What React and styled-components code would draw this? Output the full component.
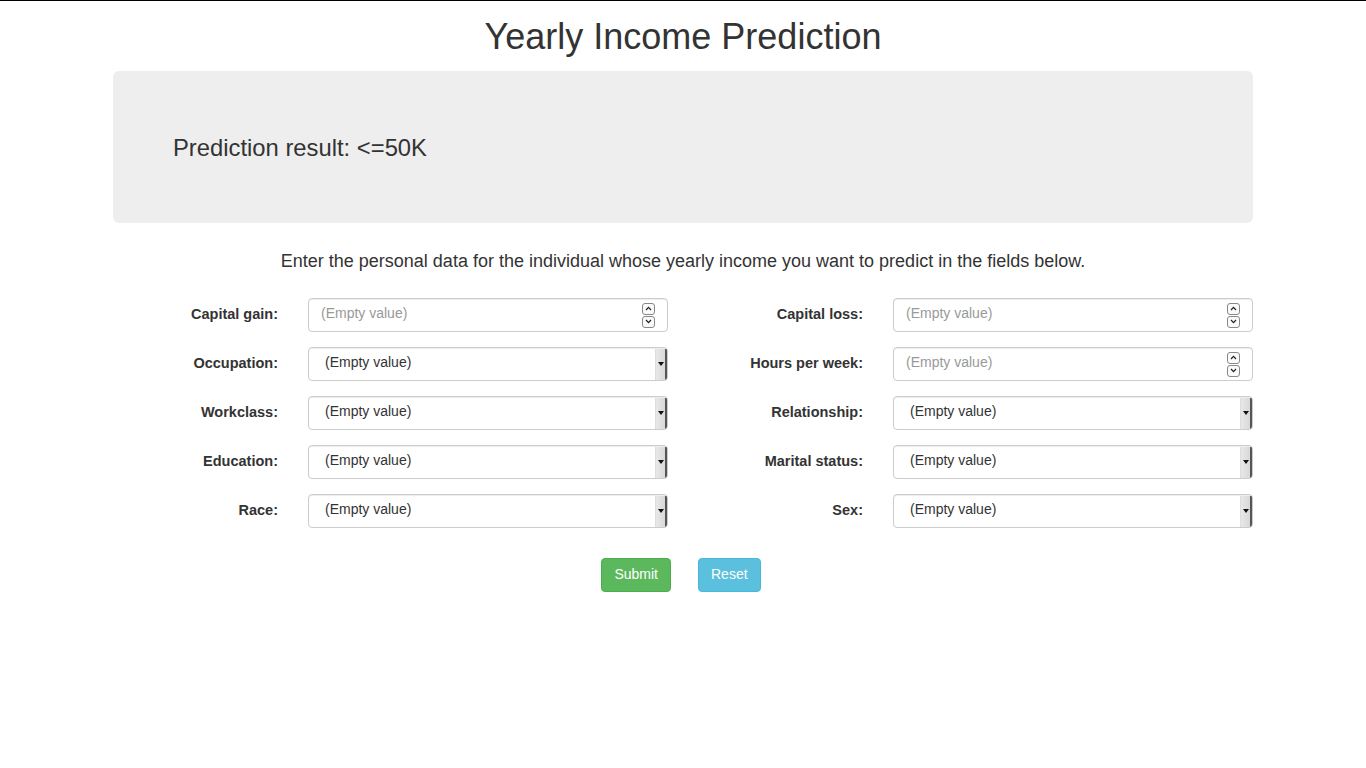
import React from "react";
import styled, { createGlobalStyle } from "styled-components";

const GlobalStyle = createGlobalStyle`
  html, body {
    margin: 0;
    padding: 0;
    background: #fff;
  }
  body {
    font-family: "Liberation Sans", Arial, sans-serif;
    font-size: 14px;
    line-height: 1.42857;
    color: #333;
    border-top: 1px solid #000;
  }
  * {
    box-sizing: border-box;
  }
`;

const Container = styled.div`
  width: 1170px;
  margin: 0 auto;
  padding: 0 15px;
`;

const Title = styled.h1`
  margin: 16px 0 14px;
  font-size: 36px;
  font-weight: 500;
  line-height: 1.1;
  text-align: center;
`;

const Jumbotron = styled.div`
  background: #eee;
  border-radius: 6px;
  padding: 48px 60px;
  margin-bottom: 28px;
`;

const Result = styled.h3`
  margin: 16px 0 14px;
  font-size: 23.8px;
  font-weight: 500;
  line-height: 26.4px;
`;

const Intro = styled.p`
  margin: 0 0 25px;
  font-size: 18px;
  line-height: 1.2;
  text-align: center;
`;

const FormGrid = styled.div`
  display: grid;
  grid-template-columns: 1fr 1fr;
  margin: 0 -15px;
`;

const Column = styled.div`
  display: flex;
  flex-direction: column;
  gap: 15px;
`;

const FormRow = styled.div`
  display: grid;
  grid-template-columns: 195px 1fr;
`;

const Label = styled.label`
  padding: 6px 15px 0;
  text-align: right;
  font-weight: bold;
  font-size: 14.5px;
`;

const FieldWrap = styled.div`
  padding: 0 15px;
`;

const Field = styled.div`
  position: relative;
  height: 34px;
  border: 1px solid #ccc;
  border-radius: 4px;
  background: #fff;
  box-shadow: inset 0 1px 1px rgba(0, 0, 0, 0.075);
  display: flex;
  align-items: center;
  padding-left: ${(p) => (p.$select ? "16px" : "12px")};
  padding-bottom: 2px;
  font-size: 14px;
  color: ${(p) => (p.$select ? "#333" : "#999")};
  overflow: hidden;
`;

const Spinner = styled.div`
  position: absolute;
  right: 12px;
  top: 4px;
  display: flex;
  flex-direction: column;
  gap: 1px;
`;

const SpinBox = styled.div`
  width: 13px;
  height: 12px;
  border: 1px solid #888;
  border-radius: 3px;
  display: flex;
  align-items: center;
  justify-content: center;
  background: #fafafa;
`;

const SelectButton = styled.div`
  position: absolute;
  right: 0;
  top: 1px;
  bottom: 0;
  width: 12px;
  background: linear-gradient(to right, #e8e8e8, #d8d8d8);
  border-right: 2px solid #555;
  border-left: 1px solid #ddd;
  display: flex;
  align-items: center;
  justify-content: center;
`;

const Arrow = styled.div`
  width: 0;
  height: 0;
  border-left: 3px solid transparent;
  border-right: 3px solid transparent;
  border-top: 4px solid #111;
`;

const Buttons = styled.div`
  display: flex;
  justify-content: center;
  gap: 27px;
  margin-top: 30px;
  padding-right: 4px;
`;

const Button = styled.button`
  font-family: inherit;
  font-size: 14px;
  line-height: 20px;
  padding: 5px 12px 7px;
  border-radius: 4px;
  color: #fff;
  border: 1px solid ${(p) => (p.$kind === "success" ? "#4cae4c" : "#46b8da")};
  background: ${(p) => (p.$kind === "success" ? "#5cb85c" : "#5bc0de")};
  cursor: pointer;
`;

const Chevron = ({ up }) => (
  <svg width="7" height="5" viewBox="0 0 7 5">
    <path
      d={up ? "M1 4 L3.5 1.3 L6 4" : "M1 1 L3.5 3.7 L6 1"}
      fill="none"
      stroke="#222"
      strokeWidth="1.2"
    />
  </svg>
);

const NumberField = () => (
  <Field>
    (Empty value)
    <Spinner>
      <SpinBox>
        <Chevron up />
      </SpinBox>
      <SpinBox>
        <Chevron />
      </SpinBox>
    </Spinner>
  </Field>
);

const SelectField = () => (
  <Field $select>
    (Empty value)
    <SelectButton>
      <Arrow />
    </SelectButton>
  </Field>
);

const left = [
  ["Capital gain:", "number"],
  ["Occupation:", "select"],
  ["Workclass:", "select"],
  ["Education:", "select"],
  ["Race:", "select"],
];

const right = [
  ["Capital loss:", "number"],
  ["Hours per week:", "number"],
  ["Relationship:", "select"],
  ["Marital status:", "select"],
  ["Sex:", "select"],
];

const renderRows = (rows) =>
  rows.map(([label, kind]) => (
    <FormRow key={label}>
      <Label>{label}</Label>
      <FieldWrap>{kind === "number" ? <NumberField /> : <SelectField />}</FieldWrap>
    </FormRow>
  ));

export default function App() {
  return (
    <>
      <GlobalStyle />
      <Container>
        <Title>Yearly Income Prediction</Title>
        <Jumbotron>
          <Result>Prediction result: &lt;=50K</Result>
        </Jumbotron>
        <Intro>
          Enter the personal data for the individual whose yearly income you want to
          predict in the fields below.
        </Intro>
        <FormGrid>
          <Column>{renderRows(left)}</Column>
          <Column>{renderRows(right)}</Column>
        </FormGrid>
        <Buttons>
          <Button $kind="success">Submit</Button>
          <Button $kind="info">Reset</Button>
        </Buttons>
      </Container>
    </>
  );
}
